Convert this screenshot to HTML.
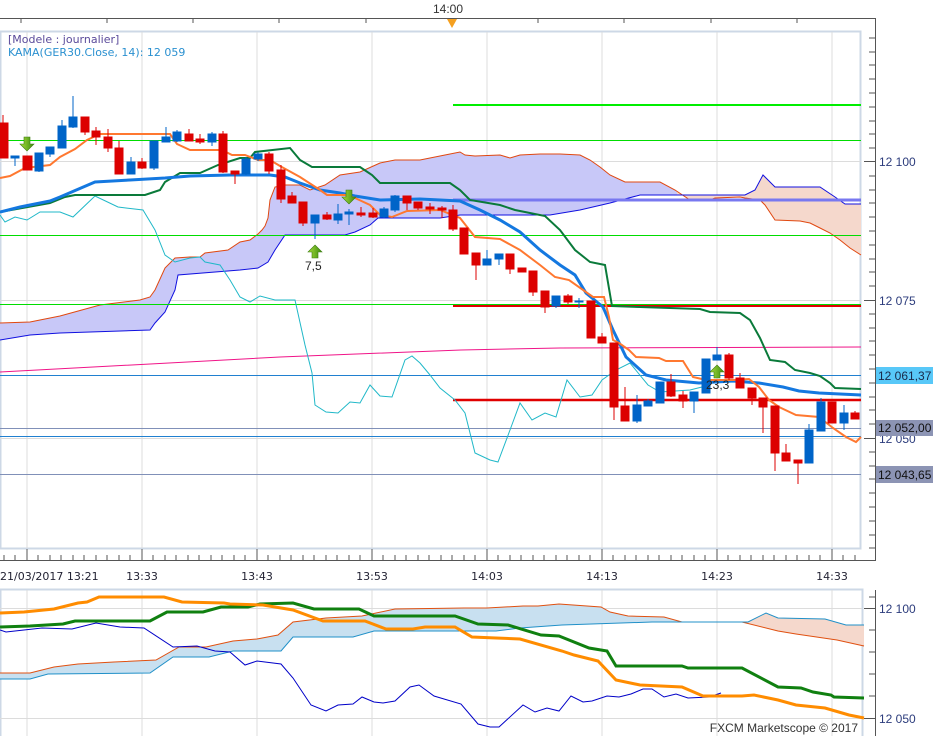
<!DOCTYPE html>
<html><head><meta charset="utf-8"><style>
html,body{margin:0;padding:0;background:#fff;}
svg{display:block;font-family:"Liberation Sans",sans-serif;}
</style></head><body>
<svg width="933" height="736" viewBox="0 0 933 736" xmlns="http://www.w3.org/2000/svg">
<defs>
<linearGradient id="ga" x1="0" y1="0" x2="1" y2="0"><stop offset="0" stop-color="#a8dc3c"/><stop offset="1" stop-color="#3c8c10"/></linearGradient>
<clipPath id="cL"><rect x="0" y="0" width="677" height="736"/></clipPath>
<clipPath id="cR"><rect x="677" y="0" width="200" height="736"/></clipPath>
<clipPath id="dL"><rect x="0" y="0" width="748" height="736"/></clipPath>
<clipPath id="dR"><rect x="748" y="0" width="200" height="736"/></clipPath>
</defs>
<rect width="933" height="736" fill="#fff"/>
<text x="433" y="13" font-size="12" fill="#333">14:00</text>
<line x1="0" y1="18.5" x2="875" y2="18.5" stroke="#555"/>
<g stroke="#555"><line x1="21" y1="18" x2="21" y2="23"/><line x1="107" y1="18" x2="107" y2="23"/><line x1="193" y1="18" x2="193" y2="23"/><line x1="279" y1="18" x2="279" y2="23"/><line x1="366" y1="18" x2="366" y2="23"/><line x1="538" y1="18" x2="538" y2="23"/><line x1="624" y1="18" x2="624" y2="23"/><line x1="711" y1="18" x2="711" y2="23"/><line x1="797" y1="18" x2="797" y2="23"/></g>
<polygon points="447,19 457,19 452,28" fill="#f5a020"/>
<rect x="0.5" y="31.5" width="860" height="517" fill="none" stroke="#cdd8e6" stroke-width="2"/>
<g stroke="#dcdcdc"><line x1="27" y1="32" x2="27" y2="548"/><line x1="142" y1="32" x2="142" y2="548"/><line x1="257" y1="32" x2="257" y2="548"/><line x1="372" y1="32" x2="372" y2="548"/><line x1="487" y1="32" x2="487" y2="548"/><line x1="602" y1="32" x2="602" y2="548"/><line x1="717" y1="32" x2="717" y2="548"/><line x1="832" y1="32" x2="832" y2="548"/>
<line x1="0" y1="161.5" x2="861" y2="161.5"/><line x1="0" y1="300.5" x2="861" y2="300.5"/><line x1="0" y1="438.5" x2="861" y2="438.5"/></g>
<g clip-path="url(#cL)"><polygon fill="#c8c8f8" points="0,323 30,322 60,316 100,305 140,300 150,297 155,290 165,268 175,258 190,257 200,257 205,253 228,250 240,242 250,240 258,234 262,230 265,226 268,218 270,200 275,187 285,185 300,185 310,190 325,185 340,175 360,172 380,163 395,160 420,160 445,155 460,152 465,155 475,156 500,155 510,158 520,155 540,154 560,154 580,155 590,160 600,167 610,175 625,182 660,182 675,190 690,200 710,200 715,198 740,197 745,198 760,200 765,205 775,220 800,221 810,223 820,228 830,233 840,240 850,248 861,255 861,204 845,204 835,197 820,187 775,187 763,175 755,190 745,195 650,195 640,195 610,203 580,210 550,215 460,215 440,218 378,218 370,225 355,232 345,235 285,235 275,250 268,262 258,268 240,270 178,275 175,290 165,312 155,323 150,330 60,333 30,335 0,340"/></g>
<g clip-path="url(#cR)"><polygon fill="#f5d8cc" points="625,182 660,182 675,190 690,200 710,200 715,198 740,197 745,198 760,200 765,205 775,220 800,221 810,223 820,228 830,233 840,240 850,248 861,255 861,204 845,204 835,197 820,187 775,187 763,175 755,190 745,195 650,195 640,195 610,203"/></g>
<polyline fill="none" stroke="#e04810" points="0,323 30,322 60,316 100,305 140,300 150,297 155,290 165,268 175,258 190,257 200,257 205,253 228,250 240,242 250,240 258,234 262,230 265,226 268,218 270,200 275,187 285,185 300,185 310,190 325,185 340,175 360,172 380,163 395,160 420,160 445,155 460,152 465,155 475,156 500,155 510,158 520,155 540,154 560,154 580,155 590,160 600,167 610,175 625,182 660,182 675,190 690,200 710,200 715,198 740,197 745,198 760,200 765,205 775,220 800,221 810,223 820,228 830,233 840,240 850,248 861,255"/>
<polyline fill="none" stroke="#1010e0" points="0,340 30,335 60,333 150,330 155,323 165,312 175,290 178,275 240,270 258,268 268,262 275,250 285,235 345,235 355,232 370,225 378,218 440,218 460,215 550,215 580,210 610,203 640,195 745,195 755,190 763,175 775,187 820,187 835,197 845,204 861,204"/>
<line x1="453" y1="105" x2="861" y2="105" stroke="#00ee00" stroke-width="2"/>
<line x1="0" y1="140.5" x2="861" y2="140.5" stroke="#00dd00"/>
<line x1="0" y1="235.5" x2="861" y2="235.5" stroke="#00dd00"/>
<line x1="0" y1="304.5" x2="861" y2="304.5" stroke="#00dd00"/>
<line x1="453" y1="306" x2="861" y2="306" stroke="#e00000" stroke-width="2"/>
<line x1="453" y1="200" x2="861" y2="200" stroke="#7878f0" stroke-width="3"/>
<polyline fill="none" stroke="#f01488" points="0,372 280,357 461,350 560,348 861,347"/>
<line x1="0" y1="375.5" x2="861" y2="375.5" stroke="#2080d0"/>
<line x1="453" y1="400" x2="861" y2="400" stroke="#e00000" stroke-width="2.5"/>
<line x1="0" y1="428.5" x2="861" y2="428.5" stroke="#8090b8"/>
<line x1="0" y1="436.5" x2="861" y2="436.5" stroke="#2080d0"/>
<line x1="0" y1="474.5" x2="861" y2="474.5" stroke="#8090b8"/>
<polyline fill="none" stroke="#20b8c8" points="0,215 5,222 15,217 27,220 40,212 60,212 73,217 95,196 118,207 143,210 155,230 165,255 175,262 190,258 200,257 205,262 220,265 230,280 240,297 250,302 260,296 275,300 295,300 305,345 312,373 315,405 326,412 338,413 350,402 360,403 370,385 380,396 392,397 405,360 412,356 420,363 430,375 440,388 455,400 465,413 475,453 490,460 498,462 510,430 520,403 532,420 545,413 556,417 567,380 580,397 592,395 602,380 616,370 630,363 648,385 660,392 690,390 710,385"/>
<polyline fill="none" stroke="#0a7a3a" stroke-width="2" points="0,212 50,203 65,197 75,195 145,195 160,190 165,182 180,173 200,173 218,165 240,158 250,158 255,152 290,148 300,160 312,167 360,167 372,175 380,183 450,183 460,190 470,200 500,205 515,210 525,212 545,216 560,230 575,250 590,262 605,265 612,306 640,307 700,309 710,312 740,313 750,320 760,338 770,360 785,362 795,370 810,373 820,376 830,383 835,388 861,389"/>
<polyline fill="none" stroke="#1478e0" stroke-width="3" points="0,212 20,207 50,201 60,197 95,182 130,180 165,178 190,176 230,175 270,175 285,177 300,183 320,190 340,193 355,196 380,200 420,199 460,201 480,210 500,220 520,232 540,250 560,265 575,275 586,293 603,307 613,330 626,357 646,375 666,380 699,383 733,381 759,383 783,387 799,391 819,393 861,395"/>
<polyline fill="none" stroke="#ff7830" stroke-width="2" points="0,178 10,176 25,168 50,165 60,157 75,149 87,140 100,134 170,134 177,144 190,150 222,150 232,155 245,155 258,160 270,160 280,166 300,177 320,190 327,195 345,195 355,198 370,205 380,215 392,217 407,211 440,210 460,218 475,237 500,239 520,250 540,265 555,277 569,280 593,297 604,297 609,317 613,340 619,343 629,350 636,357 659,358 666,361 683,361 693,377 706,380 733,380 749,379 759,387 769,400 779,407 796,415 819,417 833,428 846,437 856,442 861,437"/>
<g>
<g stroke="#dc0000" fill="#dc0000">
<line x1="3" y1="115" x2="3" y2="158"/><rect x="-1" y="123" width="9" height="35"/>
<line x1="27" y1="156" x2="27" y2="170"/><rect x="23" y="156" width="9" height="14"/>
<line x1="85" y1="117" x2="85" y2="135"/><rect x="81" y="117" width="8" height="15"/>
<line x1="96" y1="127" x2="96" y2="145"/><rect x="92" y="131" width="8" height="6"/>
<line x1="108" y1="129" x2="108" y2="152"/><rect x="104" y="137" width="8" height="11"/>
<line x1="119" y1="141" x2="119" y2="174"/><rect x="115" y="148" width="8" height="26"/>
<line x1="142" y1="158" x2="142" y2="169"/><rect x="138" y="162" width="8" height="6"/>
<line x1="189" y1="129" x2="189" y2="141"/><rect x="185" y="134" width="8" height="7"/>
<line x1="200" y1="134" x2="200" y2="144"/><rect x="196" y="139" width="8" height="3"/>
<line x1="223" y1="131" x2="223" y2="173"/><rect x="219" y="134" width="8" height="38"/>
<line x1="235" y1="171" x2="235" y2="184"/><rect x="231" y="171" width="8" height="3"/>
<line x1="269" y1="152" x2="269" y2="174"/><rect x="265" y="154" width="8" height="17"/>
<line x1="281" y1="165" x2="281" y2="203"/><rect x="277" y="170" width="8" height="29"/>
<line x1="292" y1="192" x2="292" y2="203"/><rect x="288" y="196" width="8" height="7"/>
<line x1="303" y1="202" x2="303" y2="226"/><rect x="299" y="202" width="8" height="21"/>
<line x1="327" y1="212" x2="327" y2="220"/><rect x="323" y="215" width="8" height="4"/>
<line x1="361" y1="207" x2="361" y2="217"/><rect x="357" y="213" width="8" height="2"/>
<line x1="373" y1="208" x2="373" y2="218"/><rect x="369" y="213" width="8" height="4"/>
<line x1="407" y1="196" x2="407" y2="210"/><rect x="403" y="196" width="8" height="7"/>
<line x1="418" y1="202" x2="418" y2="210"/><rect x="414" y="202" width="8" height="6"/>
<line x1="430" y1="203" x2="430" y2="214"/><rect x="426" y="207" width="8" height="2"/>
<line x1="442" y1="206" x2="442" y2="218"/><rect x="438" y="208" width="8" height="2"/>
<line x1="453" y1="205" x2="453" y2="231"/><rect x="449" y="210" width="8" height="19"/>
<rect x="460" y="228" width="8" height="26"/>
<line x1="476" y1="253" x2="476" y2="280"/><rect x="472" y="253" width="8" height="12"/>
<line x1="510" y1="254" x2="510" y2="274"/><rect x="506" y="254" width="8" height="15"/>
<rect x="518" y="268" width="8" height="4"/>
<line x1="533" y1="271" x2="533" y2="296"/><rect x="529" y="271" width="8" height="21"/>
<line x1="545" y1="291" x2="545" y2="313"/><rect x="541" y="291" width="8" height="16"/>
<line x1="568" y1="294" x2="568" y2="304"/><rect x="564" y="296" width="8" height="6"/>
<rect x="587" y="301" width="8" height="37"/>
<line x1="602" y1="333" x2="602" y2="343"/><rect x="598" y="337" width="8" height="6"/>
<line x1="614" y1="343" x2="614" y2="420"/><rect x="610" y="343" width="8" height="64"/>
<line x1="625" y1="387" x2="625" y2="421"/><rect x="621" y="406" width="8" height="15"/>
<line x1="671" y1="374" x2="671" y2="397"/><rect x="667" y="382" width="8" height="14"/>
<line x1="683" y1="391" x2="683" y2="408"/><rect x="679" y="395" width="8" height="6"/>
<line x1="729" y1="353" x2="729" y2="380"/><rect x="725" y="355" width="8" height="23"/>
<line x1="740" y1="373" x2="740" y2="388"/><rect x="736" y="378" width="8" height="10"/>
<line x1="752" y1="388" x2="752" y2="405"/><rect x="748" y="388" width="8" height="10"/>
<line x1="763" y1="398" x2="763" y2="433"/><rect x="759" y="398" width="8" height="9"/>
<line x1="775" y1="406" x2="775" y2="471"/><rect x="771" y="406" width="8" height="47"/>
<line x1="786" y1="444" x2="786" y2="461"/><rect x="782" y="453" width="8" height="8"/>
<line x1="798" y1="460" x2="798" y2="484"/><rect x="794" y="460" width="8" height="3"/>
<rect x="828" y="402" width="8" height="21"/>
<line x1="855" y1="411" x2="855" y2="419"/><rect x="851" y="413" width="8" height="6"/>
</g>
<g stroke="#0064c8" fill="#0064c8">
<line x1="15" y1="156" x2="15" y2="166"/><rect x="11" y="156" width="8" height="2"/>
<line x1="39" y1="153" x2="39" y2="172"/><rect x="35" y="153" width="8" height="18"/>
<line x1="50" y1="147" x2="50" y2="157"/><rect x="46" y="147" width="8" height="7"/>
<line x1="62" y1="120" x2="62" y2="148"/><rect x="58" y="126" width="8" height="22"/>
<line x1="73" y1="96" x2="73" y2="128"/><rect x="69" y="117" width="8" height="10"/>
<line x1="131" y1="157" x2="131" y2="174"/><rect x="127" y="162" width="8" height="12"/>
<line x1="154" y1="141" x2="154" y2="170"/><rect x="150" y="141" width="8" height="27"/>
<line x1="166" y1="127" x2="166" y2="142"/><rect x="162" y="137" width="8" height="5"/>
<line x1="177" y1="130" x2="177" y2="142"/><rect x="173" y="132" width="8" height="9"/>
<line x1="212" y1="132" x2="212" y2="146"/><rect x="208" y="134" width="8" height="8"/>
<line x1="246" y1="157" x2="246" y2="175"/><rect x="242" y="159" width="8" height="15"/>
<line x1="258" y1="152" x2="258" y2="161"/><rect x="254" y="154" width="8" height="5"/>
<line x1="315" y1="215" x2="315" y2="239"/><rect x="311" y="215" width="8" height="8"/>
<line x1="338" y1="204" x2="338" y2="224"/><rect x="334" y="214" width="8" height="6"/>
<line x1="349" y1="209" x2="349" y2="225"/><rect x="345" y="212" width="8" height="2"/>
<line x1="384" y1="207" x2="384" y2="218"/><rect x="380" y="209" width="8" height="8"/>
<line x1="395" y1="195" x2="395" y2="212"/><rect x="391" y="196" width="8" height="14"/>
<line x1="487" y1="250" x2="487" y2="265"/><rect x="483" y="259" width="8" height="6"/>
<line x1="499" y1="254" x2="499" y2="265"/><rect x="495" y="254" width="8" height="5"/>
<line x1="556" y1="296" x2="556" y2="308"/><rect x="552" y="296" width="8" height="10"/>
<line x1="579" y1="298" x2="579" y2="308"/><rect x="575" y="301" width="8" height="1"/>
<line x1="637" y1="395" x2="637" y2="423"/><rect x="633" y="405" width="8" height="16"/>
<line x1="648" y1="399" x2="648" y2="406"/><rect x="644" y="401" width="8" height="5"/>
<rect x="656" y="382" width="8" height="21"/>
<line x1="694" y1="392" x2="694" y2="413"/><rect x="690" y="392" width="8" height="9"/>
<rect x="702" y="359" width="8" height="34"/>
<line x1="717" y1="347" x2="717" y2="360"/><rect x="713" y="355" width="8" height="5"/>
<line x1="809" y1="424" x2="809" y2="463"/><rect x="805" y="430" width="8" height="33"/>
<line x1="821" y1="398" x2="821" y2="431"/><rect x="817" y="402" width="8" height="29"/>
<line x1="844" y1="405" x2="844" y2="430"/><rect x="840" y="413" width="8" height="10"/>
</g>
</g>
<g fill="url(#ga)" stroke="#3c7c10" stroke-width="0.6">
<polygon points="24,137 30,137 30,144 34,144 27,151 20,144 24,144"/>
<polygon points="346,190 352,190 352,197 356,197 349,204 342,197 346,197"/>
<polygon points="315,245 322,252 318,252 318,258 312,258 312,252 308,252"/>
<polygon points="717,365 724,372 720,372 720,378 714,378 714,372 710,372"/>
</g>
<text x="305" y="270" font-size="12" fill="#222">7,5</text>
<text x="706" y="389" font-size="12" fill="#222">23,3</text>
<text x="8" y="43" font-size="11" font-family="DejaVu Sans, sans-serif" fill="#5a4a9a">[Modele : journalier]</text>
<text x="8" y="56" font-size="11" font-family="DejaVu Sans, sans-serif" fill="#2a90d0">KAMA(GER30.Close, 14): 12 059</text>
<line x1="875.5" y1="18" x2="875.5" y2="561" stroke="#555"/>
<g stroke="#555">
<line x1="869" y1="38" x2="875" y2="38"/><line x1="869" y1="52" x2="875" y2="52"/><line x1="869" y1="65" x2="875" y2="65"/><line x1="869" y1="79" x2="875" y2="79"/><line x1="869" y1="93" x2="875" y2="93"/><line x1="869" y1="107" x2="875" y2="107"/><line x1="869" y1="121" x2="875" y2="121"/><line x1="869" y1="134" x2="875" y2="134"/><line x1="869" y1="148" x2="875" y2="148"/><line x1="864" y1="161.5" x2="875" y2="161.5"/><line x1="869" y1="176" x2="875" y2="176"/><line x1="869" y1="190" x2="875" y2="190"/><line x1="869" y1="203" x2="875" y2="203"/><line x1="869" y1="217" x2="875" y2="217"/><line x1="869" y1="231" x2="875" y2="231"/><line x1="869" y1="245" x2="875" y2="245"/><line x1="869" y1="259" x2="875" y2="259"/><line x1="869" y1="272" x2="875" y2="272"/><line x1="869" y1="286" x2="875" y2="286"/><line x1="864" y1="300.5" x2="875" y2="300.5"/><line x1="869" y1="314" x2="875" y2="314"/><line x1="869" y1="328" x2="875" y2="328"/><line x1="869" y1="341" x2="875" y2="341"/><line x1="869" y1="355" x2="875" y2="355"/><line x1="869" y1="369" x2="875" y2="369"/><line x1="869" y1="383" x2="875" y2="383"/><line x1="869" y1="397" x2="875" y2="397"/><line x1="869" y1="410" x2="875" y2="410"/><line x1="869" y1="424" x2="875" y2="424"/><line x1="864" y1="438.5" x2="875" y2="438.5"/><line x1="869" y1="452" x2="875" y2="452"/><line x1="869" y1="466" x2="875" y2="466"/><line x1="869" y1="479" x2="875" y2="479"/><line x1="869" y1="493" x2="875" y2="493"/><line x1="869" y1="507" x2="875" y2="507"/><line x1="869" y1="521" x2="875" y2="521"/><line x1="869" y1="535" x2="875" y2="535"/><line x1="869" y1="548" x2="875" y2="548"/>
</g>
<text x="879" y="166" font-size="12" fill="#2c3c7c">12 100</text>
<text x="879" y="305" font-size="12" fill="#2c3c7c">12 075</text>
<text x="879" y="443" font-size="12" fill="#2c3c7c">12 050</text>
<rect x="876" y="367" width="57" height="17" fill="#58c8f8"/>
<text x="878" y="380" font-size="12" fill="#1a2a4a">12 061,37</text>
<rect x="876" y="420" width="57" height="16" fill="#8c94b4"/>
<text x="878" y="432" font-size="12" fill="#111">12 052,00</text>
<rect x="876" y="466" width="57" height="17" fill="#8c94b4"/>
<text x="878" y="479" font-size="12" fill="#111">12 043,65</text>
<line x1="0" y1="560.5" x2="876" y2="560.5" stroke="#555"/>
<g stroke="#555">
<line x1="27" y1="549" x2="27" y2="560"/><line x1="142" y1="549" x2="142" y2="560"/><line x1="257" y1="549" x2="257" y2="560"/><line x1="372" y1="549" x2="372" y2="560"/><line x1="487" y1="549" x2="487" y2="560"/><line x1="602" y1="549" x2="602" y2="560"/><line x1="717" y1="549" x2="717" y2="560"/><line x1="832" y1="549" x2="832" y2="560"/>
<line x1="4" y1="555" x2="4" y2="560"/><line x1="15" y1="555" x2="15" y2="560"/><line x1="38" y1="555" x2="38" y2="560"/><line x1="50" y1="555" x2="50" y2="560"/><line x1="61" y1="555" x2="61" y2="560"/><line x1="73" y1="555" x2="73" y2="560"/><line x1="84" y1="555" x2="84" y2="560"/><line x1="96" y1="555" x2="96" y2="560"/><line x1="107" y1="555" x2="107" y2="560"/><line x1="119" y1="555" x2="119" y2="560"/><line x1="130" y1="555" x2="130" y2="560"/><line x1="153" y1="555" x2="153" y2="560"/><line x1="165" y1="555" x2="165" y2="560"/><line x1="176" y1="555" x2="176" y2="560"/><line x1="188" y1="555" x2="188" y2="560"/><line x1="199" y1="555" x2="199" y2="560"/><line x1="211" y1="555" x2="211" y2="560"/><line x1="222" y1="555" x2="222" y2="560"/><line x1="234" y1="555" x2="234" y2="560"/><line x1="245" y1="555" x2="245" y2="560"/><line x1="268" y1="555" x2="268" y2="560"/><line x1="280" y1="555" x2="280" y2="560"/><line x1="291" y1="555" x2="291" y2="560"/><line x1="303" y1="555" x2="303" y2="560"/><line x1="314" y1="555" x2="314" y2="560"/><line x1="326" y1="555" x2="326" y2="560"/><line x1="337" y1="555" x2="337" y2="560"/><line x1="349" y1="555" x2="349" y2="560"/><line x1="360" y1="555" x2="360" y2="560"/><line x1="383" y1="555" x2="383" y2="560"/><line x1="395" y1="555" x2="395" y2="560"/><line x1="406" y1="555" x2="406" y2="560"/><line x1="418" y1="555" x2="418" y2="560"/><line x1="429" y1="555" x2="429" y2="560"/><line x1="441" y1="555" x2="441" y2="560"/><line x1="452" y1="555" x2="452" y2="560"/><line x1="464" y1="555" x2="464" y2="560"/><line x1="475" y1="555" x2="475" y2="560"/><line x1="498" y1="555" x2="498" y2="560"/><line x1="510" y1="555" x2="510" y2="560"/><line x1="521" y1="555" x2="521" y2="560"/><line x1="533" y1="555" x2="533" y2="560"/><line x1="544" y1="555" x2="544" y2="560"/><line x1="556" y1="555" x2="556" y2="560"/><line x1="567" y1="555" x2="567" y2="560"/><line x1="579" y1="555" x2="579" y2="560"/><line x1="590" y1="555" x2="590" y2="560"/><line x1="613" y1="555" x2="613" y2="560"/><line x1="625" y1="555" x2="625" y2="560"/><line x1="636" y1="555" x2="636" y2="560"/><line x1="648" y1="555" x2="648" y2="560"/><line x1="659" y1="555" x2="659" y2="560"/><line x1="671" y1="555" x2="671" y2="560"/><line x1="682" y1="555" x2="682" y2="560"/><line x1="694" y1="555" x2="694" y2="560"/><line x1="705" y1="555" x2="705" y2="560"/><line x1="728" y1="555" x2="728" y2="560"/><line x1="740" y1="555" x2="740" y2="560"/><line x1="751" y1="555" x2="751" y2="560"/><line x1="763" y1="555" x2="763" y2="560"/><line x1="774" y1="555" x2="774" y2="560"/><line x1="786" y1="555" x2="786" y2="560"/><line x1="797" y1="555" x2="797" y2="560"/><line x1="809" y1="555" x2="809" y2="560"/><line x1="820" y1="555" x2="820" y2="560"/><line x1="843" y1="555" x2="843" y2="560"/><line x1="855" y1="555" x2="855" y2="560"/>
</g>
<g font-size="11" fill="#223" font-family="DejaVu Sans, sans-serif">
<text x="0" y="580">21/03/2017 13:21</text>
<text x="142" y="580" text-anchor="middle">13:33</text>
<text x="257" y="580" text-anchor="middle">13:43</text>
<text x="372" y="580" text-anchor="middle">13:53</text>
<text x="487" y="580" text-anchor="middle">14:03</text>
<text x="602" y="580" text-anchor="middle">14:13</text>
<text x="717" y="580" text-anchor="middle">14:23</text>
<text x="832" y="580" text-anchor="middle">14:33</text>
</g>
<rect x="0.5" y="589.5" width="862" height="150" fill="none" stroke="#cdd8e6" stroke-width="2"/>
<g stroke="#dcdcdc"><line x1="27" y1="590" x2="27" y2="736"/><line x1="142" y1="590" x2="142" y2="736"/><line x1="257" y1="590" x2="257" y2="736"/><line x1="372" y1="590" x2="372" y2="736"/><line x1="487" y1="590" x2="487" y2="736"/><line x1="602" y1="590" x2="602" y2="736"/><line x1="717" y1="590" x2="717" y2="736"/><line x1="832" y1="590" x2="832" y2="736"/>
<line x1="0" y1="608.5" x2="862" y2="608.5"/><line x1="0" y1="718.5" x2="862" y2="718.5"/></g>
<g clip-path="url(#dL)"><polygon fill="#c8e0f0" points="0,673 30,673 54,667 78,664 114,662 156,660 179,647 206,647 233,641 257,639 278,635 293,622 326,618 362,616 395,609 464,608 487,608 523,606 538,606 559,604 601,607 610,612 628,616 664,617 682,622 742,622 778,631 796,634 837,640 864,646 864,625 846,625 825,619 778,618 766,613 748,622 652,622 562,625 520,628 496,631 374,631 353,637 293,637 281,651 233,651 209,657 173,657 150,673 48,674 30,679 0,679"/></g>
<g clip-path="url(#dR)"><polygon fill="#f5d8cc" points="742,622 778,631 796,634 837,640 864,646 864,625 846,625 825,619 778,618 766,613 748,622"/></g>
<polyline fill="none" stroke="#e05010" points="0,673 30,673 54,667 78,664 114,662 156,660 179,647 206,647 233,641 257,639 278,635 293,622 326,618 362,616 395,609 464,608 487,608 523,606 538,606 559,604 601,607 610,612 628,616 664,617 682,622 742,622 778,631 796,634 837,640 864,646"/>
<polyline fill="none" stroke="#2090c8" points="0,679 30,679 48,674 150,673 173,657 209,657 233,651 281,651 293,637 353,637 374,631 496,631 520,628 562,625 652,622 748,622 766,613 778,618 825,619 846,625 864,625"/>
<polyline fill="none" stroke="#0000c8" points="0,630 6,632 24,630 42,628 72,629 96,623 120,627 144,628 173,647 197,646 215,651 230,652 245,665 257,661 281,664 293,678 311,705 326,711 338,705 353,704 362,697 374,702 383,703 395,701 410,687 419,685 434,696 461,704 478,724 490,727 499,727 523,705 535,712 547,708 559,711 571,696 583,702 592,701 607,696 619,697 631,694 643,689 652,689 664,697 676,694 688,698 709,697 721,693"/>
<polyline fill="none" stroke="#108010" stroke-width="3" points="0,627 30,626 63,624 75,621 150,621 167,612 203,612 221,607 248,607 260,604 293,603 314,609 359,609 374,616 455,616 478,624 508,625 541,635 559,636 589,648 607,651 616,666 682,666 688,668 742,668 778,687 801,688 813,692 831,695 834,697 864,698"/>
<polyline fill="none" stroke="#ff8c00" stroke-width="3" points="0,613 24,612 54,609 78,603 87,602 99,597 164,597 182,602 224,603 230,604 263,605 293,610 323,621 365,621 386,629 413,629 425,627 455,627 472,637 496,638 520,639 562,651 574,655 598,661 616,680 640,685 682,687 703,696 742,696 754,695 778,700 796,705 825,708 849,715 864,718"/>
<line x1="875.5" y1="590" x2="875.5" y2="736" stroke="#555"/>
<g stroke="#555"><line x1="869" y1="597" x2="875" y2="597"/><line x1="864" y1="608.5" x2="875" y2="608.5"/><line x1="869" y1="630" x2="875" y2="630"/><line x1="869" y1="652" x2="875" y2="652"/><line x1="869" y1="674" x2="875" y2="674"/><line x1="869" y1="696" x2="875" y2="696"/><line x1="864" y1="718.5" x2="875" y2="718.5"/></g>
<text x="879" y="613" font-size="12" fill="#2c3c7c">12 100</text>
<text x="879" y="723" font-size="12" fill="#2c3c7c">12 050</text>
<text x="858" y="732" font-size="12" fill="#333" text-anchor="end">FXCM Marketscope © 2017</text>
</svg>
</body></html>
